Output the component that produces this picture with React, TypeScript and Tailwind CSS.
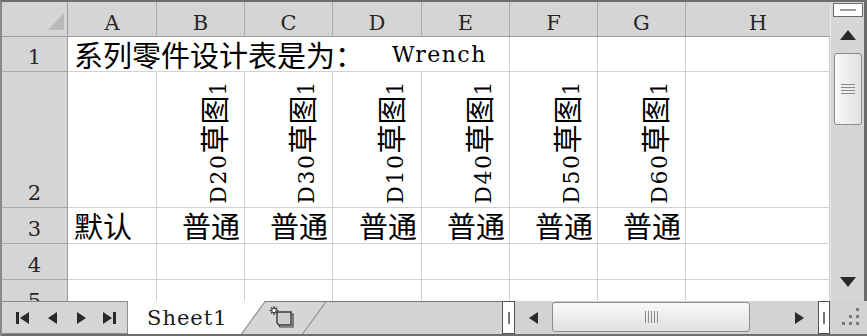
import React from "react";

const SERIF = "font-['DejaVu_Serif','Noto_Sans_CJK_SC',serif]";
const CJK = "font-['Noto_Sans_CJK_SC',sans-serif]";

function Hdr({ children, last }: { children?: React.ReactNode; last?: boolean }) {
  return (
    <div
      className={`flex items-end justify-center bg-[#d5d5d5] border-b border-[#9c9c9c] ${
        last ? "" : "border-r border-r-[#a9a9a9]"
      } text-[21px] leading-[20px] text-[#262626] ${SERIF}`}
    >
      <span className="pb-[3px]">{children}</span>
    </div>
  );
}

function RowNum({ n }: { n: number }) {
  return (
    <div
      className={`flex items-end justify-center bg-[#d5d5d5] border-b border-b-[#a9a9a9] border-r border-r-[#9c9c9c] text-[21px] leading-[20px] text-[#262626] ${SERIF}`}
    >
      <span className="pb-[4px]">{n}</span>
    </div>
  );
}

function Cell({ children, className = "" }: { children?: React.ReactNode; className?: string }) {
  return <div className={`bg-white border-r border-b border-[#d2d2d2] ${className}`}>{children}</div>;
}

function Rot({ code }: { code: string }) {
  return (
    <Cell className="flex justify-end items-end pr-[12px] pb-[3px]">
      <div
        className={`[writing-mode:vertical-rl] [text-orientation:sideways] rotate-180 whitespace-nowrap text-[22px] leading-[26px] tracking-[1.5px] text-[#000] ${SERIF}`}
      >
        {code}
        <span className={`text-[29px] tracking-normal ${CJK}`}>草图</span>1
      </div>
    </Cell>
  );
}

function Putong() {
  return (
    <Cell className="flex justify-end items-center pr-[4px]">
      <span className={`text-[29px] leading-[29px] text-[#000] ${CJK}`}>普通</span>
    </Cell>
  );
}

function Tri({ dir, className = "" }: { dir: "l" | "r" | "u" | "d"; className?: string }) {
  const pts =
    dir === "l" ? "9,0 9,12 0,6" : dir === "r" ? "0,0 0,12 9,6" : dir === "u" ? "0,10 16,10 8,0" : "0,0 16,0 8,10";
  const w = dir === "l" || dir === "r" ? 9 : 16;
  const h = dir === "l" || dir === "r" ? 12 : 10;
  return (
    <svg width={w} height={h} viewBox={`0 0 ${w} ${h}`} className={className}>
      <polygon points={pts} fill="#2a2a2a" />
    </svg>
  );
}

export default function App() {
  const rotCodes = ["D20", "D30", "D10", "D40", "D50", "D60"];
  return (
    <div className="w-[867px] h-[336px] overflow-hidden flex flex-col bg-[#d4d4d4] border-t-2 border-l-2 border-t-[#6e6e6e] border-l-[#8a8a8a]">
      {/* main */}
      <div className="flex h-[299px]">
        <div className="w-[828px] h-full overflow-hidden bg-white">
          <div className="grid grid-cols-[66px_89px_88px_88px_89px_88px_88px_88px_1fr] grid-rows-[35px_35px_136px_36px_36px_36px]">
            {/* header row */}
            <div className="relative bg-[#d5d5d5] border-b border-r border-[#9c9c9c]">
              <svg width="16" height="17" viewBox="0 0 16 17" className="absolute left-[46px] top-[11px]">
                <polygon points="16,0 16,17 0,17" fill="#b9b9b9" />
              </svg>
            </div>
            {["A", "B", "C", "D", "E", "F", "G"].map((c) => (
              <Hdr key={c}>{c}</Hdr>
            ))}
            <Hdr last>H</Hdr>

            {/* row 1 */}
            <RowNum n={1} />
            <Cell className="col-span-5 flex items-center pl-[6px] whitespace-nowrap">
              <span className={`text-[29px] leading-[29px] text-[#000] ${CJK}`}>系列零件设计表是为：</span>
              <span className={`ml-[28px] text-[22px] leading-[29px] tracking-[1.5px] text-[#000] ${SERIF}`}>
                Wrench
              </span>
            </Cell>
            <Cell />
            <Cell />
            <Cell />

            {/* row 2 */}
            <RowNum n={2} />
            <Cell />
            {rotCodes.map((c) => (
              <Rot key={c} code={c} />
            ))}
            <Cell />

            {/* row 3 */}
            <RowNum n={3} />
            <Cell className="flex items-center pl-[6px]">
              <span className={`text-[29px] leading-[29px] text-[#000] ${CJK}`}>默认</span>
            </Cell>
            {rotCodes.map((c) => (
              <Putong key={c} />
            ))}
            <Cell />

            {/* row 4 */}
            <RowNum n={4} />
            {Array.from({ length: 8 }).map((_, i) => (
              <Cell key={i} />
            ))}

            {/* row 5 */}
            <RowNum n={5} />
            {Array.from({ length: 8 }).map((_, i) => (
              <Cell key={i} />
            ))}
          </div>
        </div>

        {/* vertical scrollbar */}
        <div className="w-[37px] h-full flex flex-col items-center bg-[#d6d6d6] border-l border-l-[#e8e8e8] border-r-[3px] border-r-[#6a6a6a]">
          <div className="mt-[1px] w-[30px] h-[14px] bg-white border border-[#6a6a6a] flex items-center justify-center">
            <div className="w-[16px] h-[2px] bg-[#9a9a9a]" />
          </div>
          <div className="h-[36px] flex items-center justify-center">
            <Tri dir="u" />
          </div>
          <div className="w-[28px] h-[72px] rounded-[3px] border border-[#8c8c8c] bg-[linear-gradient(to_right,#f8f8f8,#e2e2e2)] flex flex-col items-center justify-center gap-[2px]">
            <div className="w-[14px] h-[1px] bg-[#8a8a8a]" />
            <div className="w-[14px] h-[1px] bg-[#8a8a8a]" />
            <div className="w-[14px] h-[1px] bg-[#8a8a8a]" />
            <div className="w-[14px] h-[1px] bg-[#8a8a8a]" />
          </div>
          <div className="flex-1" />
          <div className="h-[24px] flex items-start justify-center">
            <Tri dir="d" />
          </div>
        </div>
      </div>

      {/* tab bar */}
      <div className="h-[35px] flex bg-[#d3d3d3] border-b-2 border-b-[#6e6e6e] -ml-[2px]">
        {/* nav */}
        <div className="w-[128px] h-full bg-[#d6d6d6] border border-[#8c8c8c] flex items-center pl-[15px]">
          <div className="flex items-center gap-[1px]">
            <div className="w-[3px] h-[12px] bg-[#2a2a2a]" />
            <Tri dir="l" />
          </div>
          <Tri dir="l" className="ml-[19px]" />
          <Tri dir="r" className="ml-[20px]" />
          <div className="flex items-center gap-[1px] ml-[17px]">
            <Tri dir="r" />
            <div className="w-[3px] h-[12px] bg-[#2a2a2a]" />
          </div>
        </div>
        {/* Sheet1 tab */}
        <div className={`w-[137px] h-full bg-white flex items-center pl-[19px] text-[21px] leading-[22px] tracking-[1px] text-[#1a1a1a] ${SERIF}`}>
          Sheet1
        </div>
        {/* insert tab */}
        <div className="relative -ml-[12px] w-[62px] h-full">
          <div className="absolute inset-0 -skew-x-[36deg] bg-[#d6d6d6] border border-b-0 border-[#7a7a7a]" />
          <svg width="26" height="22" viewBox="0 0 26 22" className="absolute left-[16px] top-[5px]">
            <path d="M8 6 H22 V19 H10 L8 17 Z" fill="#cfcfcf" stroke="#3a3a3a" strokeWidth="1.4" />
            <path d="M22 8 H24 V21 H11 L10 19" fill="none" stroke="#3a3a3a" strokeWidth="1.2" />
            <g stroke="#3a3a3a" strokeWidth="1.3">
              <line x1="5" y1="0" x2="5" y2="9" />
              <line x1="0.5" y1="4.5" x2="9.5" y2="4.5" />
              <line x1="2" y1="1.5" x2="8" y2="7.5" />
              <line x1="8" y1="1.5" x2="2" y2="7.5" />
            </g>
            <circle cx="5" cy="4.5" r="2.2" fill="#ffffff" stroke="#3a3a3a" strokeWidth="1" />
          </svg>
        </div>
        {/* gray area */}
        <div className="flex-1 border-t border-[#7a7a7a]" />
        {/* splitter */}
        <div className="w-[13px] h-full bg-white border border-[#555] flex items-center justify-center">
          <div className="w-[2px] h-[12px] bg-[#777]" />
        </div>
        {/* left arrow */}
        <div className="w-[37px] h-full flex items-center justify-center">
          <Tri dir="l" />
        </div>
        {/* thumb */}
        <div className="w-[198px] h-[30px] mt-[1px] rounded-[3px] border border-[#8c8c8c] bg-[linear-gradient(to_bottom,#fafafa,#e0e0e0)] flex items-center justify-center gap-[2px]">
          <div className="w-[1px] h-[12px] bg-[#8a8a8a]" />
          <div className="w-[1px] h-[12px] bg-[#8a8a8a]" />
          <div className="w-[1px] h-[12px] bg-[#8a8a8a]" />
          <div className="w-[1px] h-[12px] bg-[#8a8a8a]" />
          <div className="w-[1px] h-[12px] bg-[#8a8a8a]" />
        </div>
        {/* track */}
        <div className="w-[40px]" />
        {/* right arrow */}
        <div className="w-[28px] h-full flex items-center justify-start pl-[5px]">
          <Tri dir="r" />
        </div>
        {/* splitter */}
        <div className="w-[12px] h-full bg-white border border-[#555] flex items-center justify-center">
          <div className="w-[2px] h-[12px] bg-[#777]" />
        </div>
        {/* grip */}
        <div className="w-[37px] h-full relative">
          <svg width="20" height="20" viewBox="0 0 20 20" className="absolute left-[10px] top-[5px]">
            <g fill="#7a7a7a">
              <rect x="16" y="2" width="3" height="3" />
              <rect x="9" y="9" width="3" height="3" />
              <rect x="16" y="9" width="3" height="3" />
              <rect x="2" y="16" width="3" height="3" />
              <rect x="9" y="16" width="3" height="3" />
              <rect x="16" y="16" width="3" height="3" />
            </g>
          </svg>
        </div>
      </div>
    </div>
  );
}
